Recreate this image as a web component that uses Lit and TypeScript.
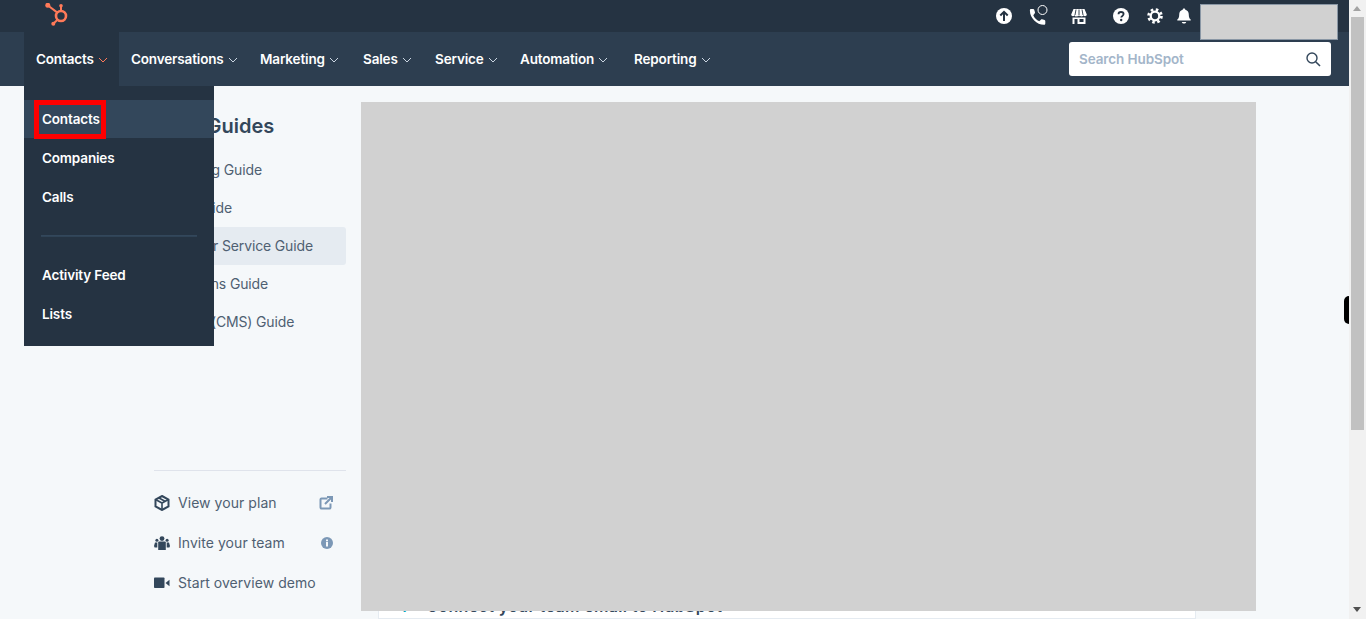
import { LitElement, html, css, svg } from "lit";
import { customElement } from "lit/decorators.js";

const NAV = [
  { label: "Contacts", width: 95 },
  { label: "Conversations", width: 129 },
  { label: "Marketing", width: 103 },
  { label: "Sales", width: 72 },
  { label: "Service", width: 85 },
  { label: "Automation", width: 114 },
  { label: "Reporting", width: 100 },
];
const GUIDES = ["Marketing Guide", "Sales Guide", "Customer Service Guide", "Operations Guide", "Website (CMS) Guide"];

const caret = html`<svg class="caret" viewBox="0 0 10 6" width="10" height="6"><path d="M1 1l4 4 4-4" fill="none" stroke="currentColor" stroke-width="1"/></svg>`;

const icons = {
  logo: svg`<g fill="none" stroke="#ff7a59"><circle cx="16" cy="13" r="5" stroke-width="2.6"/><path d="M16 8V3M12.400 9.600 3 2.500M12.500 16.800 8.500 20.500" stroke-width="2"/></g><g fill="#ff7a59"><circle cx="16" cy="2.800" r="1.800"/><circle cx="2.800" cy="2.300" r="2.500"/><circle cx="8.300" cy="20.800" r="2"/></g>`,
  up: svg`<circle cx="8" cy="8" r="8" fill="#fff"/><path d="M8 13V4M4.300 7.500 8 3.800l3.700 3.700" fill="none" stroke="#253342" stroke-width="2"/>`,
  phone: svg`<path d="M4.300 6.200c1.100 2.700 3.200 4.900 6 6.100l1.800-1.800c.3-.3.600-.3 1-.2l2.500.8c.5.2.7.5.7 1v2.400c0 .8-.5 1.300-1.300 1.300C7.800 15.800.9 8.900.9 1.700V1c0-.6.400-.9 1-.9h2.300c.5 0 .8.300 1 .7l.8 2.500c.1.400 0 .7-.2 1z" transform="translate(0 4)" fill="#fff"/><circle cx="13.500" cy="5" r="4.500" fill="none" stroke="#fff" stroke-width="1"/>`,
  store: svg`<path d="M2.500 1h11l2.300 5.500c0 2-2.700 2.300-3.300.7-.6 1.600-3.900 1.600-4.500 0-.6 1.600-3.900 1.600-4.500 0C2.900 8.800.2 8.500.2 6.500z" fill="#fff"/><path d="M5 1.500 4 7M8 1.500V7M11 1.500 12 7" stroke="#253342" stroke-width=".9"/><path d="M1.500 9.500h13v6.500h-13z" fill="#fff"/><path d="M3.500 11h3v5h-3zM8.500 11h4v3h-4z" fill="#253342"/>`,
  help: svg`<circle cx="8" cy="8" r="8" fill="#fff"/><path d="M5.500 6.200C5.500 4.700 6.600 4 8 4c1.500 0 2.600.800 2.600 2.100 0 1.900-2.400 1.800-2.400 3.500" fill="none" stroke="#253342" stroke-width="1.800"/><circle cx="8.200" cy="12" r="1.200" fill="#253342"/>`,
  gear: svg`<circle cx="8" cy="8" r="4.300" fill="none" stroke="#fff" stroke-width="2.300"/><circle cx="8" cy="8" r="6.400" fill="none" stroke="#fff" stroke-width="2.800" stroke-dasharray="2.500 2.530"/>`,
  bell: svg`<path d="M7 0.500c.8 0 1.300.500 1.300 1.200 2.500.6 3.500 2.600 3.500 5 0 2.300.5 3.600 1.900 4.900v.9H.3v-.9c1.400-1.300 1.900-2.600 1.900-4.900 0-2.400 1-4.400 3.500-5C5.700 1 6.200.5 7 .5z" fill="#fff"/><path d="M4.800 14h4.400c-.3 1-1.100 1.500-2.200 1.500S5.100 15 4.800 14z" fill="#fff"/>`,
  search: svg`<circle cx="6" cy="6" r="5" fill="none" stroke="#33475b" stroke-width="1.400"/><path d="M9.700 9.700l4.300 4.300" stroke="#33475b" stroke-width="1.600"/>`,
  cube: svg`<path d="M7.500 1 14 4.500v7L7.500 15 1 11.500v-7z" fill="none" stroke="#33475b" stroke-width="2"/><path d="M1.500 4.800 7.500 8l6-3.200M7.500 8v6.500M4.500 3l6 3.200" fill="none" stroke="#33475b" stroke-width="1.600"/>`,
  team: svg`<circle cx="8" cy="2.600" r="2.400" fill="#33475b"/><path d="M5.200 5.600h5.600c.6 0 1 .4 1 1V14H4.200V6.600c0-.6.400-1 1-1z" fill="#33475b"/><circle cx="2.900" cy="4.300" r="1.500" fill="#33475b"/><circle cx="13.100" cy="4.300" r="1.500" fill="#33475b"/><path d="M1 6.500h2.300V11.500H.6L0 10zM12.700 6.500H15L16 10l-.6 1.500h-2.700z" fill="#33475b"/>`,
  video: svg`<rect x="0" y="1.500" width="10.500" height="10.500" rx=".8" fill="#33475b"/><path d="M11.500 7l4-3.300v6.600z" fill="#33475b"/>`,
  ext: svg`<path d="M8.500 2.500H2.500a1 1 0 0 0-1 1v8a1 1 0 0 0 1 1h8a1 1 0 0 0 1-1V7.500" fill="none" stroke="#7c98b6" stroke-width="2"/><path d="M6 8l6-6M8 1h5v5" fill="none" stroke="#7c98b6" stroke-width="2"/>`,
  info: svg`<circle cx="6" cy="6" r="6" fill="#7c98b6"/><rect x="5" y="5" width="2" height="4.500" fill="#f5f8fa"/><rect x="5" y="2.500" width="2" height="1.800" fill="#f5f8fa"/>`,
};

@customElement("app-root")
export class AppRoot extends LitElement {
  static styles = css`
    :host { display: flex; height: 619px; overflow: hidden; font-family: Inter, "Liberation Sans", sans-serif; background: #f5f8fa; color: #33475b; }
    .page { flex: 1; min-width: 0; position: relative; display: flex; flex-direction: column; }
    .top { height: 32px; flex: none; background: #253342; display: flex; align-items: center; position: relative; padding-left: 45px; }
    .logo { display: block; margin-top: -2px; }
    .tools { margin-left: auto; margin-right: 158px; display: flex; align-items: center; }
    .tools svg { display: block; flex: none; }
    .t-up { margin-right: 17px; }
    .t-phone { margin-right: 23px; margin-top: -3px; }
    .t-store { margin-right: 26px; }
    .t-help { margin-right: 18px; }
    .t-gear { margin-right: 14px; }
    .redact { position: absolute; left: 1200px; top: 4px; width: 136px; height: 34px; background: #d1d1d1; border: 1px solid #8a97a5; z-index: 5; }
    .nav { height: 54px; flex: none; background: #2d3e50; display: flex; align-items: stretch; padding-left: 24px; position: relative; z-index: 3; }
    .item { display: flex; align-items: center; gap: 4px; padding-left: 12px; box-sizing: border-box; position: relative; color: #fff; font-size: 13.5px; font-weight: 600; letter-spacing: -0.15px; }
    .item.active { background: #253342; }
    .item.active .caret { color: #ff7a59; }
    .caret { display: block; flex: none; color: #cbd6e2; margin-top: 2px; }
    .searchbox { position: absolute; left: 1069px; top: 10px; width: 262px; height: 34px; background: #fff; border-radius: 3px; display: flex; align-items: center; justify-content: space-between; padding: 0 10px; box-sizing: border-box; }
    .ph { color: #a3b5c9; font-size: 13.5px; font-weight: 600; letter-spacing: -0.1px; }
    .menu { position: absolute; left: 0; top: 100%; width: 190px; height: 260px; box-sizing: border-box; background: #253342; padding-top: 14px; font-size: 13.5px; font-weight: 600; letter-spacing: -0.15px; }
    .mi { height: 39px; display: flex; align-items: center; padding-left: 18px; color: #fff; }
    .mi.cur { height: 38px; margin-bottom: 0; background: #33475b; position: relative; }
    .mark { position: absolute; left: 10px; top: 0; width: 62px; height: 29px; border: 5px solid #f00; }
    .rule { height: 1px; background: #33475b; margin: 19px 17px 18px 17px; border-bottom: 1px solid #2f4356; }
    .main { flex: 1; min-height: 0; display: flex; padding: 16px 0 0 154px; gap: 15px; }
    .side { width: 192px; flex: none; display: flex; flex-direction: column; }
    .head { font-size: 20px; font-weight: 600; line-height: 24px; height: 49px; padding: 12px 0 0 2px; box-sizing: border-box; white-space: nowrap; }
    .guide { height: 38px; display: flex; align-items: center; font-size: 14px; color: #4f6072; border-radius: 3px; white-space: nowrap; padding: 0 0 2px 1px; box-sizing: border-box; letter-spacing: -0.15px; }
    .guide.sel { background: #e5ebf1; }
    .bottom { margin-top: auto; border-top: 1px solid #dfe3eb; padding-top: 12px; padding-bottom: 16px; }
    .row { height: 40px; box-sizing: border-box; display: flex; align-items: center; font-size: 14px; color: #4f6072; letter-spacing: 0.05px; }
    .row span { padding-bottom: 2px; }
    .row > svg:first-child { flex: none; margin-right: 8px; display: block; }
    .row .end { margin-left: auto; margin-right: 13px; display: block; }
    .col { width: 895px; flex: none; display: flex; flex-direction: column; }
    .shot { height: 509px; flex: none; background: #d1d1d1; position: relative; z-index: 2; }
    .card { flex: 1; margin: -24px 60px 0 17px; background: #fff; border: 1px solid #e5ebf1; display: flex; align-items: flex-start; padding: 8px 0 0 21px; gap: 19px; font-size: 16px; font-weight: 600; letter-spacing: 0.37px; color: #33475b; }
    .num { color: #00a4bd; }
    .pill { position: absolute; right: 0; top: 296px; width: 5px; height: 28px; background: #000; border-radius: 5px 0 0 5px; z-index: 4; }
    .scroll { width: 17px; flex: none; background: #f1f1f1; position: relative; }
    .thumb { position: absolute; left: 2px; top: 17px; width: 13px; height: 413px; background: #c1c1c1; }
    .arrow { position: absolute; left: 4px; width: 0; height: 0; border-left: 4.500px solid transparent; border-right: 4.500px solid transparent; }
    .arrow.up { top: 6px; border-bottom: 5px solid #a3a3a3; }
    .arrow.down { bottom: 7px; border-top: 5px solid #505050; }
  `;

  private icon(name: keyof typeof icons, w: number, h: number, vb: string, cls = "") {
    return html`<svg class=${cls} width=${w} height=${h} viewBox=${vb}>${icons[name]}</svg>`;
  }

  render() {
    return html`
      <div class="page">
        <div class="top">
          ${this.icon("logo", 24, 24, "0 0 24 24", "logo")}
          <div class="tools">
            ${this.icon("up", 16, 16, "0 0 16 16", "t-up")}
            ${this.icon("phone", 19, 20, "0 0 19 20", "t-phone")}
            ${this.icon("store", 16, 16, "0 0 16 16", "t-store")}
            ${this.icon("help", 16, 16, "0 0 16 16", "t-help")}
            ${this.icon("gear", 16, 16, "0 0 16 16", "t-gear")}
            ${this.icon("bell", 14, 16, "0 0 14 16", "t-bell")}
          </div>
          <div class="redact"></div>
        </div>
        <div class="nav">
          ${NAV.map((n, i) => html`
            <div class="item ${i === 0 ? "active" : ""}" style="width:${n.width}px">
              <span>${n.label}</span>${caret}
              ${i === 0 ? html`
                <div class="menu">
                  <div class="mi cur">Contacts<div class="mark"></div></div>
                  <div class="mi">Companies</div>
                  <div class="mi">Calls</div>
                  <div class="rule"></div>
                  <div class="mi">Activity Feed</div>
                  <div class="mi">Lists</div>
                </div>` : ""}
            </div>`)}
          <div class="searchbox">
            <span class="ph">Search HubSpot</span>
            ${this.icon("search", 15, 15, "0 0 15 15")}
          </div>
        </div>
        <div class="main">
          <div class="side">
            <div class="head">User Guides</div>
            ${GUIDES.map((g, i) => html`<div class="guide ${i === 2 ? "sel" : ""}">${g}</div>`)}
            <div class="bottom">
              <div class="row">${this.icon("cube", 16, 16, "0 0 15 16")}<span>View your plan</span>${this.icon("ext", 14, 14, "0 0 14 14", "end")}</div>
              <div class="row">${this.icon("team", 16, 14, "0 0 16 14")}<span>Invite your team</span>${this.icon("info", 12, 12, "0 0 12 12", "end")}</div>
              <div class="row">${this.icon("video", 16, 14, "0 0 16 14")}<span>Start overview demo</span></div>
            </div>
          </div>
          <div class="col">
            <div class="shot"></div>
            <div class="card"><span class="num">1</span><span>Connect your team email to HubSpot</span></div>
          </div>
        </div>
        <div class="pill"></div>
      </div>
      <div class="scroll">
        <div class="arrow up"></div>
        <div class="thumb"></div>
        <div class="arrow down"></div>
      </div>
    `;
  }
}
